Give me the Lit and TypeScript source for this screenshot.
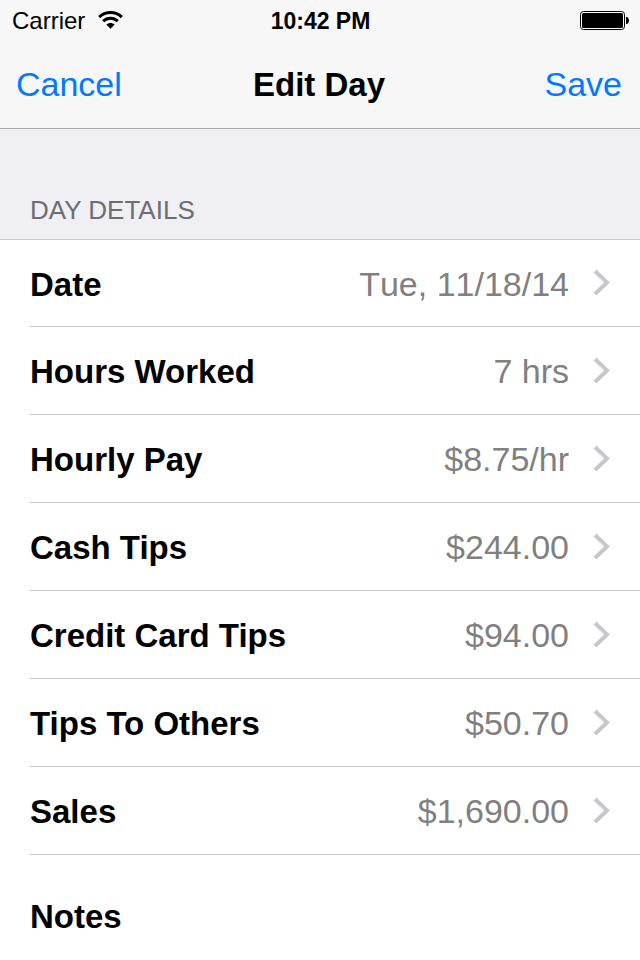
import { LitElement, html, css } from "lit";
import { customElement, property } from "lit/decorators.js";

interface Detail {
  label: string;
  value: string;
}

@customElement("status-bar")
class StatusBar extends LitElement {
  static styles = css`
    :host {
      display: grid;
      grid-template-columns: 1fr auto 1fr;
      align-items: center;
      height: 42px;
      padding: 0 11px 0 12px;
      font-size: 24px;
      line-height: 40px;
    }
    .carrier {
      display: flex;
      align-items: center;
      gap: 13px;
    }
    .time {
      font-size: 23px;
      font-weight: bold;
    }
    .battery {
      justify-self: end;
    }
    svg {
      display: block;
      margin-bottom: 2px;
    }
  `;

  render() {
    return html`
      <div class="carrier">
        <span>Carrier</span>
        <svg width="25" height="18" viewBox="0 0 25 18" aria-label="Wi-Fi">
          <g fill="none" stroke="#000" stroke-width="3">
            <path d="M1.2 6.1C7.5 0 17.5 0 23.8 6.1" />
            <path d="M5.2 10.2C9.3 6.3 15.7 6.3 19.8 10.2" />
          </g>
          <path d="M8.3 13.6C10.7 11.3 14.3 11.3 16.7 13.6L12.5 17.8Z" />
        </svg>
      </div>
      <span class="time">10:42 PM</span>
      <svg class="battery" width="49" height="19" viewBox="0 0 49 19" aria-label="Battery full">
        <rect x="0.5" y="0.5" width="44" height="18" rx="3" fill="#fff" stroke="#000" />
        <rect x="2" y="2" width="41" height="15" rx="1.5" />
        <path d="M46 6H47C49.6 7 49.6 12 47 13H46Z" />
      </svg>
    `;
  }
}

@customElement("detail-row")
class DetailRow extends LitElement {
  @property() label = "";
  @property() value = "";

  static styles = css`
    :host {
      display: grid;
    }
    .row {
      display: flex;
      align-items: center;
      width: 100%;
      padding: 2px 30px 0 0;
      border: 0;
      background: none;
      font: inherit;
      color: #000;
      text-align: left;
    }
    .text {
      flex: 1;
      display: flex;
      align-items: baseline;
      justify-content: space-between;
    }
    .label {
      font-size: 33px;
      font-weight: bold;
    }
    .value {
      margin-right: 24px;
      color: #808080;
      font-kerning: none;
    }
    .chevron {
      display: block;
    }
  `;

  render() {
    return html`
      <button class="row" type="button">
        <span class="text">
          <span class="label">${this.label}</span>
          <span class="value">${this.value}</span>
        </span>
        <svg class="chevron" width="17" height="30" viewBox="0 0 17 30" aria-hidden="true">
          <path d="M2 2L14 13.5L2 25" fill="none" stroke="#c7c7cc" stroke-width="4" />
        </svg>
      </button>
    `;
  }
}

@customElement("app-root")
class AppRoot extends LitElement {
  private details: Detail[] = [
    { label: "Date", value: "Tue, 11/18/14" },
    { label: "Hours Worked", value: "7 hrs" },
    { label: "Hourly Pay", value: "$8.75/hr" },
    { label: "Cash Tips", value: "$244.00" },
    { label: "Credit Card Tips", value: "$94.00" },
    { label: "Tips To Others", value: "$50.70" },
    { label: "Sales", value: "$1,690.00" },
  ];

  static styles = css`
    :host {
      display: block;
      min-height: 100vh;
      background: #fff;
      color: #000;
      font-family: "Liberation Sans", Arial, sans-serif;
      font-size: 34px;
      line-height: 40px;
    }
    .top {
      background: #f7f7f7;
      border-bottom: 1px solid #a9a9ac;
    }
    .nav {
      display: grid;
      grid-template-columns: 1fr auto 1fr;
      align-items: baseline;
      padding: 22px 18px 24px 16px;
    }
    .action {
      justify-self: start;
      padding: 0;
      border: 0;
      background: none;
      font: inherit;
      color: #007aff;
    }
    .save {
      justify-self: end;
    }
    .title {
      margin: 0;
      font-size: 33px;
      font-weight: bold;
      line-height: 38px;
    }
    .section {
      margin: 0;
      padding: 61px 30px 9px;
      background: #efeff4;
      border-bottom: 1px solid #c8c7cc;
      color: #6d6d72;
      font-size: 26px;
      font-weight: normal;
    }
    .list {
      margin: 0;
      padding: 0 0 0 30px;
      list-style: none;
    }
    .item {
      display: grid;
      box-sizing: border-box;
      height: 88px;
      border-bottom: 1px solid #c8c7cc;
    }
    .item:first-child {
      height: 87px;
    }
    .notes {
      margin: 0;
      padding: 42px 30px 23px;
      font-size: 33px;
      font-weight: bold;
    }
  `;

  render() {
    return html`
      <header class="top">
        <status-bar></status-bar>
        <nav class="nav">
          <button class="action" type="button">Cancel</button>
          <h1 class="title">Edit Day</h1>
          <button class="action save" type="button">Save</button>
        </nav>
      </header>
      <main>
        <h2 class="section">DAY DETAILS</h2>
        <ul class="list">
          ${this.details.map(
            (d) => html`<li class="item">
              <detail-row .label=${d.label} .value=${d.value}></detail-row>
            </li>`
          )}
        </ul>
        <h2 class="notes">Notes</h2>
      </main>
    `;
  }
}
